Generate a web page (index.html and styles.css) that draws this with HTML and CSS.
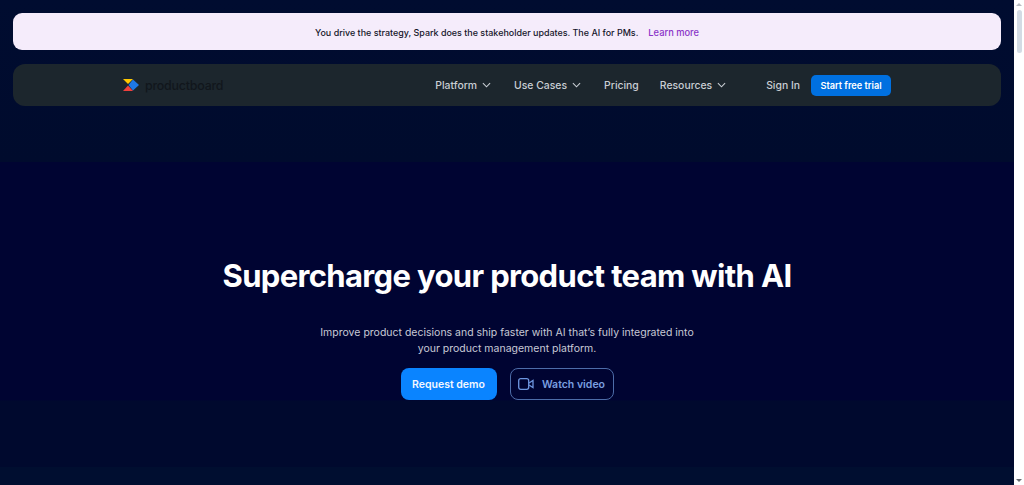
FILE: index.html
```html
<!DOCTYPE html>
<html lang="en">
<head>
<meta charset="utf-8">
<title>Productboard</title>
<link rel="stylesheet" href="styles.css">
</head>
<body>
<div class="window">
  <main class="page">
    <div class="banner">
      <span class="banner-text">You drive the strategy, Spark does the stakeholder updates. The AI for PMs.</span>
      <a class="banner-link" href="#">Learn more</a>
    </div>
    <header class="nav">
      <a class="brand" href="#">
        <svg class="brand-mark" width="16" height="12" viewBox="0 0 16 12">
          <path d="M0 0H10L5 5Z" fill="#ffc800"/>
          <path d="M0 12H10L5 6.500Z" fill="#f0403c"/>
          <path d="M10 0.500L16 6L10 11.500L5.500 6Z" fill="#1e78e6"/>
        </svg>
        <span class="brand-name">productboard</span>
      </a>
      <nav class="menu">
        <a class="menu-item has-chev" href="#">Platform <svg class="chev" width="9" height="6" viewBox="0 0 10 6"><path d="M1 1L5 5L9 1"/></svg></a>
        <a class="menu-item has-chev" href="#">Use Cases <svg class="chev" width="9" height="6" viewBox="0 0 10 6"><path d="M1 1L5 5L9 1"/></svg></a>
        <a class="menu-item" href="#">Pricing</a>
        <a class="menu-item has-chev" href="#">Resources <svg class="chev" width="9" height="6" viewBox="0 0 10 6"><path d="M1 1L5 5L9 1"/></svg></a>
      </nav>
      <a class="menu-item signin" href="#">Sign In</a>
      <a class="trial" href="#">Start free trial</a>
    </header>
    <section class="hero">
      <h1 class="hero-title">Supercharge your product team with AI</h1>
      <p class="hero-copy">Improve product decisions and ship faster with AI that’s fully integrated into<br>your product management platform.</p>
      <div class="hero-actions">
        <a class="btn-primary" href="#">Request demo</a>
        <a class="btn-outline" href="#">
          <svg width="16" height="12" viewBox="0 0 16 12" fill="none" stroke="#6d96e0" stroke-width="1.300">
            <rect x="0.700" y="0.700" width="10" height="10.600" rx="2"/>
            <path d="M11 5L15 2.500V9.500L11 7"/>
          </svg>
          Watch video
        </a>
      </div>
    </section>
  </main>
  <aside class="scrollbar">
    <span class="arrow-up"></span>
    <span class="thumb"></span>
    <span class="arrow-down"></span>
  </aside>
</div>
</body>
</html>
```
FILE: styles.css
```css
* { box-sizing: border-box; }
html, body { margin: 0; height: 100%; overflow: hidden; }
body { font-family: Inter, "Liberation Sans", sans-serif; background: #000c2e; }
a { text-decoration: none; color: inherit; }

.window { display: flex; height: 485px; }

.page {
  flex: 1;
  min-width: 0;
  padding: 13px 13px 0;
  display: flex;
  flex-direction: column;
  background: linear-gradient(#000c30 0, #000b2d 162px, #000432 162px, #000432 400px, #00092e 401px, #00092e 467px, #000e30 467px);
}

.banner {
  height: 37px;
  flex: none;
  background: #f5ecfb;
  border-radius: 9px;
  display: flex;
  align-items: center;
  justify-content: center;
  gap: 10px;
  padding-top: 1px;
  font-size: 8.950px;
  font-weight: 500;
  color: #16162a;
}
.banner-link { color: #8b35c8; font-size: 9.300px; }

.nav {
  height: 42px;
  flex: none;
  margin-top: 14px;
  background: #1c262d;
  border-radius: 12px;
  display: flex;
  align-items: center;
  padding-left: 110px;
  font-size: 10.400px;
  font-weight: 500;
  color: #c9ced4;
}
.brand { display: flex; align-items: center; gap: 6px; }
.brand-name { font-size: 12.400px; font-weight: 500; color: #11161c; letter-spacing: -0.2px; }

.menu { display: flex; align-items: center; gap: 21px; margin-left: 212px; }
.menu-item { display: flex; align-items: center; gap: 5px; }
.has-chev { padding-right: 2px; }
.chev { fill: none; stroke: #c9ced4; stroke-width: 1.200; }

.signin { margin-left: 38px; }
.trial {
  margin-left: 11px;
  width: 80px;
  height: 21px;
  background: #0070e0;
  border-radius: 5px;
  color: #fff;
  font-size: 9.200px;
  font-weight: 600;
  display: flex;
  align-items: center;
  justify-content: center;
}

.hero { display: flex; flex-direction: column; align-items: center; }
.hero-title {
  margin: 150px 0 0;
  font-size: 31px;
  line-height: 40px;
  font-weight: 700;
  color: #fff;
  letter-spacing: -0.65px;
}
.hero-copy {
  margin: 29px 0 0;
  text-align: center;
  font-size: 10.500px;
  line-height: 16px;
  color: #c8cad6;
}
.hero-actions { display: flex; gap: 13px; margin-top: 11px; }
.btn-primary {
  width: 96px;
  height: 32px;
  background: #0a84ff;
  border-radius: 8px;
  color: #f2f7ff;
  font-size: 10.500px;
  font-weight: 600;
  display: flex;
  align-items: center;
  justify-content: center;
}
.btn-outline {
  width: 104px;
  height: 32px;
  border: 1px solid #4d6ca8;
  border-radius: 8px;
  color: #7a9fe0;
  font-size: 10.500px;
  font-weight: 600;
  display: flex;
  align-items: center;
  justify-content: center;
  gap: 8px;
}

.scrollbar {
  width: 10px;
  flex: none;
  background: #fff;
  position: relative;
  display: flex;
  flex-direction: column;
  align-items: center;
  padding-top: 10px;
}
.thumb { width: 5px; height: 43px; background: #d3dbe4; border-radius: 3px; }
.arrow-up, .arrow-down {
  position: absolute;
  left: 2px;
  width: 0;
  height: 0;
  border-left: 3px solid transparent;
  border-right: 3px solid transparent;
}
.arrow-up { top: 3px; border-bottom: 3px solid #b8bcc2; }
.arrow-down { bottom: 3px; border-top: 3px solid #6a6e74; }
```
